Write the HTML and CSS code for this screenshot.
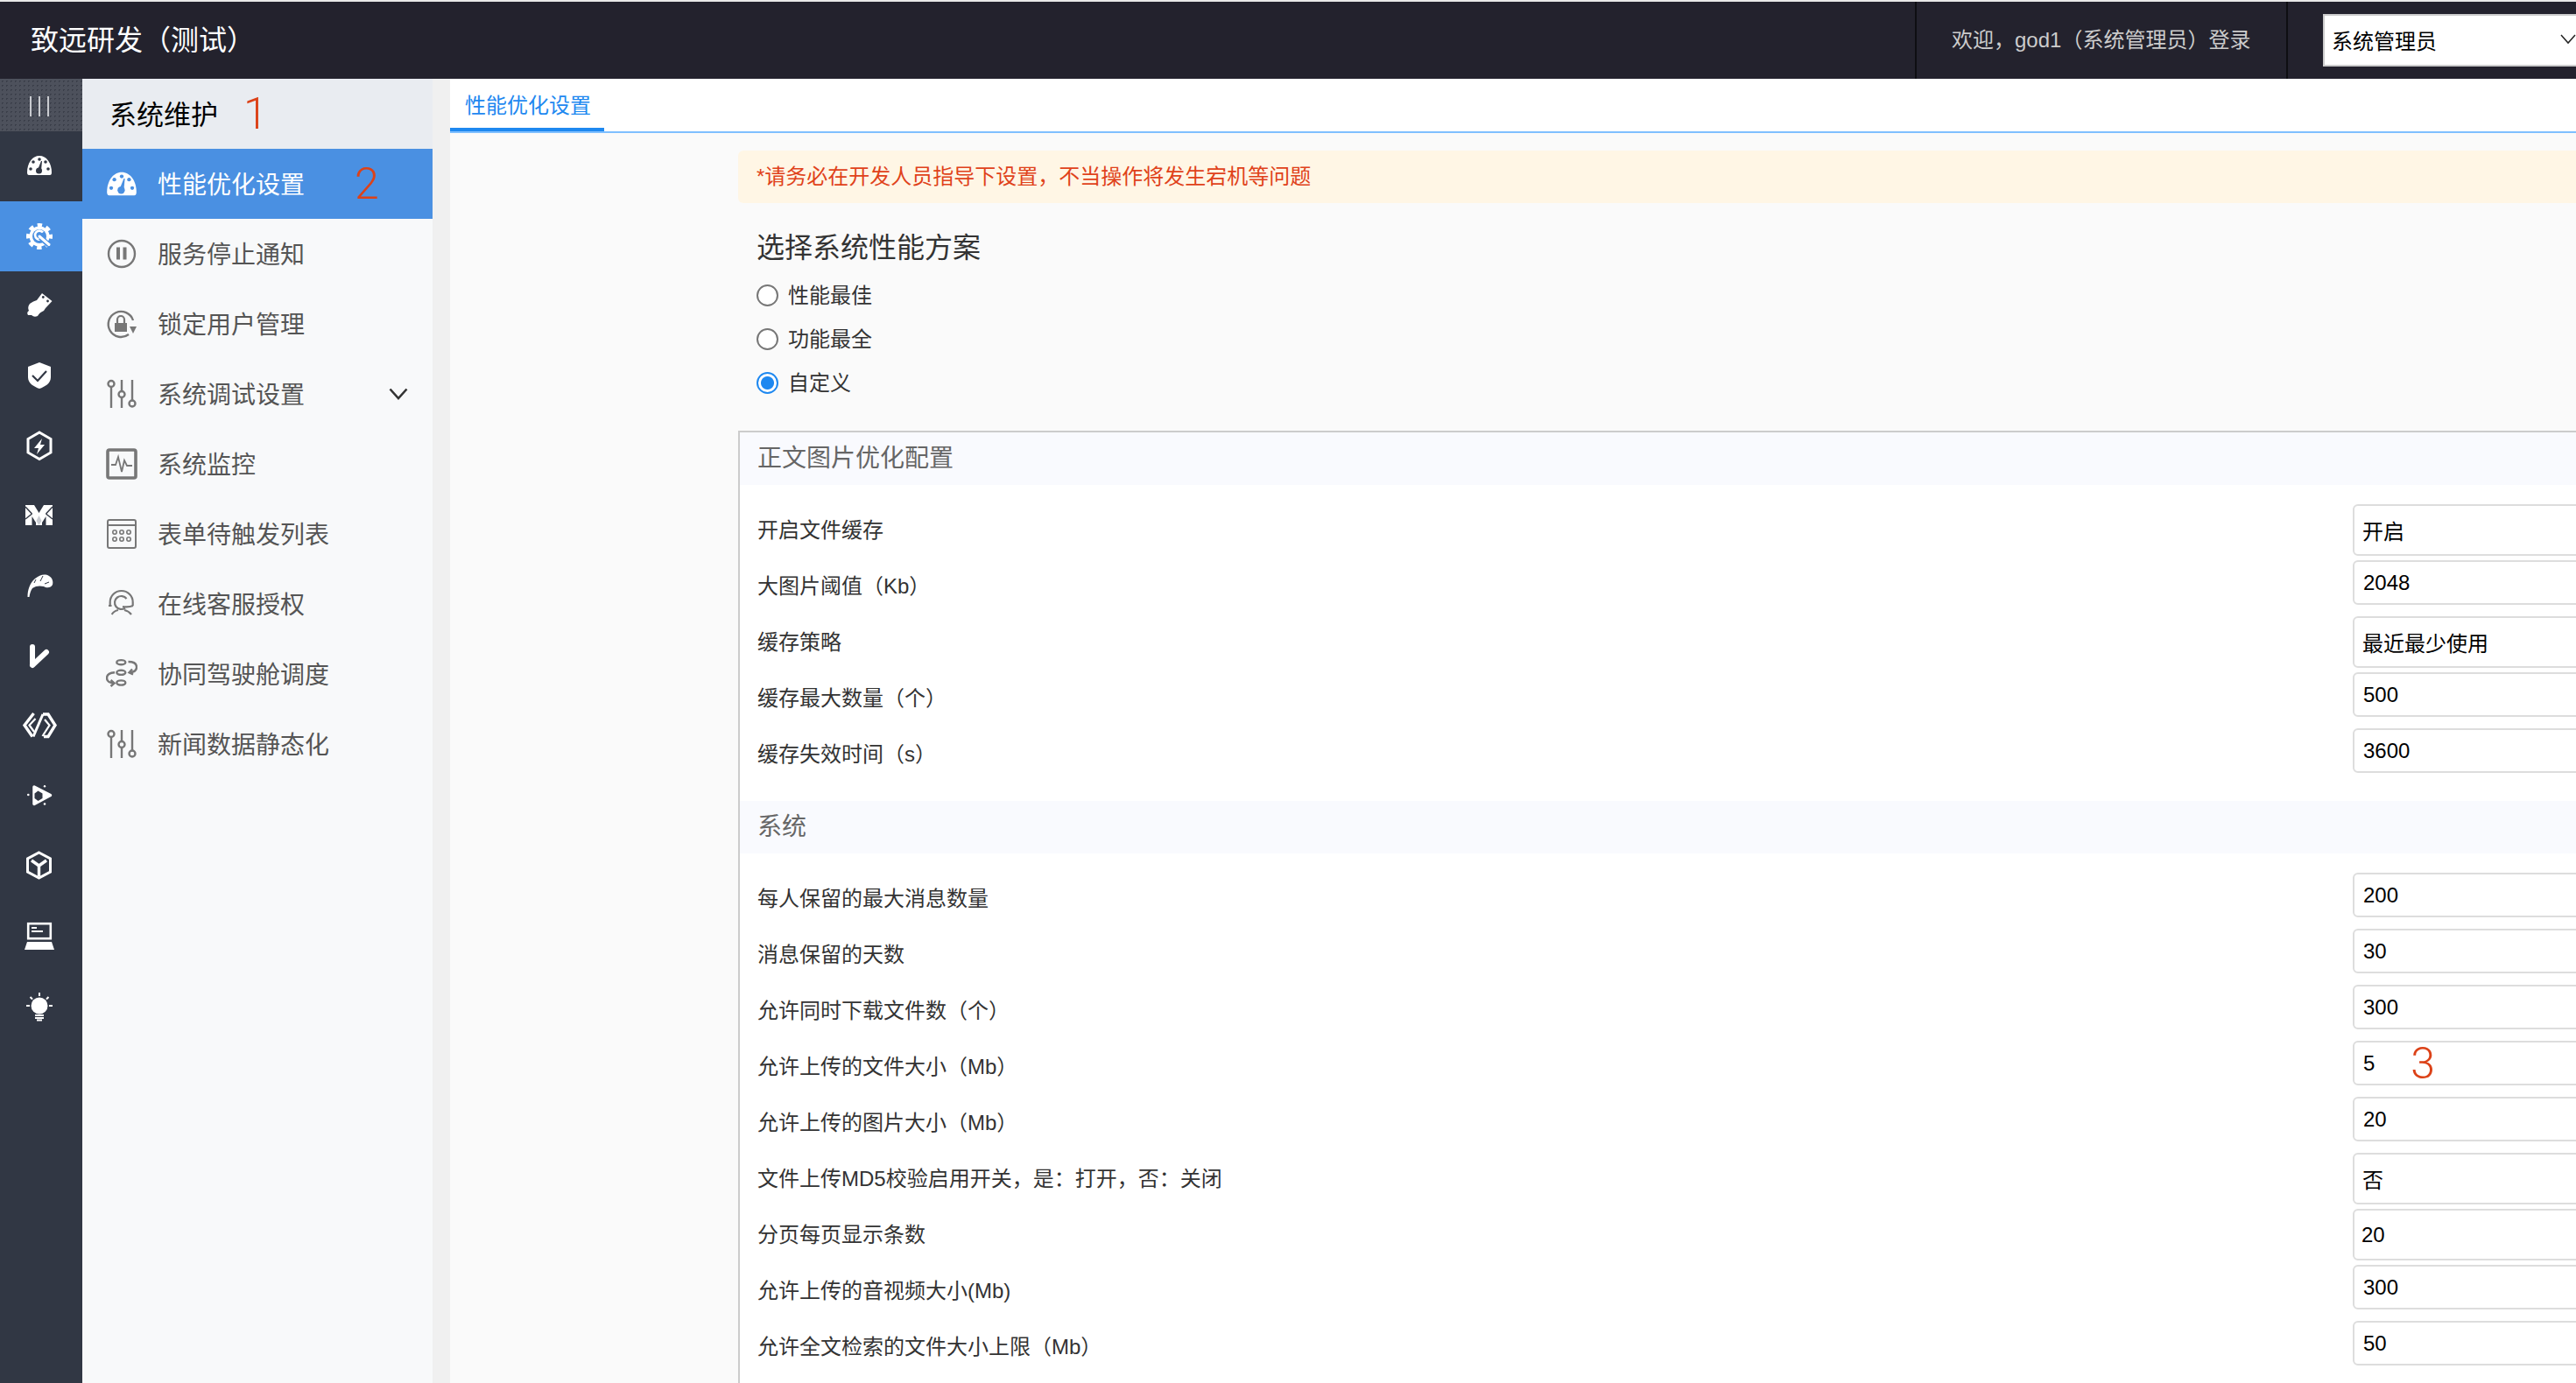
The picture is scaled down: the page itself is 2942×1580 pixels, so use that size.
FILE: index.html
```html
<!DOCTYPE html>
<html lang="zh-CN">
<head>
    <meta charset="UTF-8">
    <meta name="viewport" content="width=device-width, initial-scale=1.0">
    <title>性能优化设置</title>
    <link rel="stylesheet" href="styles.css">
</head>
<body>
    <header class="topbar">
        <div class="brand">致远研发（测试）</div>
        <div class="welcome">欢迎，god1（系统管理员）登录</div>
        <div class="role-box">
            <div class="role-select">
                <span>系统管理员</span>
                <svg class="role-arrow" viewBox="0 0 18 12"><polyline points="1 1 9 10 17 1"/></svg>
            </div>
        </div>
    </header>

    <div class="layout">
        <!-- icon rail -->
        <nav class="rail">
            <div class="rail-toggle"><span></span><span></span><span></span></div>
            <div class="rail-item">
                <svg viewBox="0 0 40 40"><path class="w" d="M8 30Q6 30 6 27C6 16 12 8 20 8S34 16 34 27Q34 30 32 30Z"/><g class="d"><circle cx="10" cy="23" r="1.8"/><circle cx="13" cy="15" r="1.8"/><circle cx="20" cy="12" r="1.8"/><circle cx="27" cy="15" r="1.8"/><circle cx="30" cy="23" r="1.8"/><circle cx="19.5" cy="25" r="3.5"/><path d="M18 24L22 14 23 14 22 25Z"/></g></svg>
            </div>
            <div class="rail-item active">
                <svg viewBox="0 0 40 40"><circle class="w" cx="20" cy="20" r="11.5"/><circle class="ws" cx="20" cy="20" r="12.5" stroke-width="5" stroke-dasharray="5.2 4.62" stroke-dashoffset="2.6"/><circle class="d" cx="20" cy="20" r="8"/><path class="ws" d="M24 15.5A5 5 0 1 0 24.5 21" stroke-width="2.6"/><line class="ds" x1="21" y1="21" x2="31" y2="30" stroke-width="6"/><line class="ws" x1="20" y1="20" x2="31" y2="29.5" stroke-width="3" stroke-linecap="round"/></svg>
            </div>
            <div class="rail-item">
                <svg viewBox="0 0 40 40"><path class="w" d="M23 5L34.5 14 27 22 25 25Q20 27 18 31Q14 33 11 30L7 30Q5 27 8 25Q6 21 9 17Q13 14 17 13Z"/><circle class="d" cx="24.3" cy="9.5" r="1.4"/><circle class="d" cx="29.5" cy="14" r="1.4"/></svg>
            </div>
            <div class="rail-item">
                <svg viewBox="0 0 40 40"><path class="w" d="M20 4L33 9V21C33 28 26 32 20 34C14 32 7 28 7 21V9Z"/><polyline class="ds" points="12 19 18 25 28 14" stroke-width="2.2"/></svg>
            </div>
            <div class="rail-item">
                <svg viewBox="0 0 40 40"><polygon class="ws" points="20 4 33 11.5 33 27 20 34.5 7 27 7 11.5" stroke-width="3"/><path class="w" d="M23 11L14 22H19L17 29 26 18H21Z"/></svg>
            </div>
            <div class="rail-item">
                <svg viewBox="0 0 40 40"><polygon class="w" points="4 7 14 7 19.5 16 25 7 35 7 35 30 4 30"/><g class="ds" stroke-width="1.4"><line x1="4" y1="9" x2="11.5" y2="17"/><line x1="35" y1="9" x2="27.5" y2="17"/><line x1="4" y1="23" x2="11.5" y2="17"/><line x1="35" y1="23" x2="27.5" y2="17"/></g><polygon class="d" points="11.5 31 11.5 20 16 27 16 31"/><polygon class="d" points="27.5 31 27.5 20 23 27 23 31"/><polygon class="gem" points="19.5 19 16.5 25 19.5 30 22.5 25"/></svg>
            </div>
            <div class="rail-item">
                <svg viewBox="0 0 40 40"><path class="w" d="M6.5 32C6.5 24 9 16 15 11C20 7 26 5 31 8C35 10 36 15 35 18C33 22 28 22 25 20C21 19 16 19 12 22C10 25 9 28 8.5 32Z"/><g class="ds" stroke-width="1"><line x1="24" y1="8" x2="21" y2="14"/><line x1="31" y1="15" x2="26" y2="17"/><line x1="16" y1="12" x2="14" y2="16"/></g></svg>
            </div>
            <div class="rail-item">
                <svg viewBox="0 0 40 40"><g class="ws" stroke-width="6" stroke-linecap="round"><line x1="12" y1="9" x2="12" y2="29"/><line x1="28" y1="15" x2="12" y2="30"/></g></svg>
            </div>
            <div class="rail-item">
                <svg viewBox="0 0 40 40"><g class="ws"><polyline points="13.5 5 3 18.5 12 31.5" stroke-width="3.4"/><polyline points="15.5 11 8.5 18.5 14 26" stroke-width="2.2"/><line x1="13" y1="31.5" x2="24" y2="6" stroke-width="3"/><polyline points="24 6 30 6 38 18.5 30 31.5 25 31.5" stroke-width="3.4"/><polyline points="26 12 31.5 18.5 23.5 31" stroke-width="2.2"/></g></svg>
            </div>
            <div class="rail-item">
                <svg viewBox="0 0 40 40"><polygon class="w tri" points="14 9 32.5 18.5 14 28.5"/><polygon class="d" points="18.5 13.5 23.5 16.5 23.5 22 18.5 25 14.5 22 14.5 16.5"/><circle class="w" cx="7.3" cy="18" r="1.3"/><circle class="w" cx="26" cy="8.3" r="1.2"/><circle class="w" cx="26" cy="28.5" r="1.3"/></svg>
            </div>
            <div class="rail-item">
                <svg viewBox="0 0 40 40"><polygon class="ws" points="19.5 4 32.5 11 32.5 26 19.5 33 6.5 26 6.5 11" stroke-width="3"/><g class="ws" stroke-width="3.4"><line x1="19.5" y1="18" x2="19.5" y2="31"/><line x1="19.5" y1="19" x2="11" y2="13"/><line x1="19.5" y1="19" x2="28" y2="13"/></g></svg>
            </div>
            <div class="rail-item">
                <svg viewBox="0 0 40 40"><rect class="ws" x="7.2" y="5.2" width="25.6" height="17" stroke-width="2.6"/><rect class="w" x="11" y="9" width="6" height="2"/><rect class="w" x="11" y="13" width="13" height="2"/><polygon class="w" points="6 26 34 26 37 35 3 35"/></svg>
            </div>
            <div class="rail-item">
                <svg viewBox="0 0 40 40"><circle class="w" cx="20" cy="19" r="9.5"/><g class="ws" stroke-width="2"><line x1="20" y1="4" x2="20" y2="8"/><line x1="5" y1="19" x2="9" y2="19"/><line x1="31" y1="19" x2="35" y2="19"/><line x1="9.5" y1="9" x2="12" y2="11.5"/><line x1="30.5" y1="9" x2="28" y2="11.5"/><line x1="15" y1="30" x2="25" y2="30"/><line x1="15" y1="33" x2="25" y2="33"/><line x1="17" y1="35.5" x2="23" y2="35.5"/></g></svg>
            </div>
        </nav>

        <!-- second level menu -->
        <aside class="sidebar">
            <div class="side-title"><span class="side-title-text">系统维护</span><span class="mark mark-one">1</span></div>
            <div class="side-item active">
                <svg class="side-icon" viewBox="5 4 30 30"><path class="fill-w" d="M8 30Q6 30 6 27C6 16 12 8 20 8S34 16 34 27Q34 30 32 30Z"/><g class="fill-b"><circle cx="10" cy="23" r="1.8"/><circle cx="13" cy="15" r="1.8"/><circle cx="20" cy="12" r="1.8"/><circle cx="27" cy="15" r="1.8"/><circle cx="30" cy="23" r="1.8"/><circle cx="19.5" cy="25" r="3.5"/><path d="M18 24L22 14 23 14 22 25Z"/></g></svg>
                <span class="side-text">性能优化设置</span><span class="mark mark-two">2</span>
            </div>
            <div class="side-item">
                <svg class="side-icon" viewBox="0 0 36 36"><circle cx="18" cy="18" r="15" stroke-width="2.4"/><rect class="fill-g" x="12" y="10.5" width="4" height="14"/><rect class="fill-g" x="19.5" y="10.5" width="4" height="14"/></svg>
                <span class="side-text">服务停止通知</span>
            </div>
            <div class="side-item">
                <svg class="side-icon" viewBox="0 0 36 36"><path d="M31 14A14.5 14.5 0 1 0 26 30" stroke-width="2.4"/><polygon class="fill-g" points="27 21 35 21 31 29"/><rect class="fill-g" x="10" y="17" width="14" height="10"/><path d="M13 17V13A4 4 0 0 1 21 13V17" stroke-width="2.2"/></svg>
                <span class="side-text">锁定用户管理</span>
            </div>
            <div class="side-item">
                <svg class="side-icon" viewBox="0 0 36 36"><g stroke-width="2.4"><line x1="6" y1="11" x2="6" y2="34"/><circle cx="6" cy="6.5" r="3.5"/><line x1="18" y1="2" x2="18" y2="15"/><circle cx="18" cy="18.5" r="3.5"/><line x1="18" y1="22" x2="18" y2="34"/><line x1="30" y1="2" x2="30" y2="25"/><circle cx="30" cy="29" r="3.5"/></g></svg>
                <span class="side-text">系统调试设置</span>
                <svg class="side-arrow" viewBox="0 0 22 14"><polyline points="1.5 1.5 11 12 20.5 1.5"/></svg>
            </div>
            <div class="side-item">
                <svg class="side-icon" viewBox="0 0 36 36"><rect x="2" y="2" width="32" height="32" rx="2" stroke-width="3.6"/><polyline points="6 19 11 19 14 10 18 27 21 14 24 20 30 20" stroke-width="1.8"/></svg>
                <span class="side-text">系统监控</span>
            </div>
            <div class="side-item">
                <svg class="side-icon" viewBox="0 0 36 36"><rect x="2" y="2" width="32" height="32" rx="2" stroke-width="2"/><line x1="2" y1="8" x2="34" y2="8" stroke-width="2"/><g stroke-width="1.6"><circle cx="10" cy="16" r="2.2"/><circle cx="18" cy="16" r="2.2"/><circle cx="26" cy="16" r="2.2"/><circle cx="10" cy="24" r="2.2"/><circle cx="18" cy="24" r="2.2"/><circle cx="26" cy="24" r="2.2"/></g></svg>
                <span class="side-text">表单待触发列表</span>
            </div>
            <div class="side-item">
                <svg class="side-icon" viewBox="0 0 36 36"><g stroke-width="2.2"><path d="M23.5 12A7.5 7.5 0 1 0 22 22.5"/><path d="M4.7 20V16A13 13 0 0 1 30.7 16V20"/><path d="M3 20H6.5M31 20Q26 22 19 21"/><path d="M6.7 30Q9 26 14 25M29 30Q26 26 21 25"/></g></svg>
                <span class="side-text">在线客服授权</span>
            </div>
            <div class="side-item">
                <svg class="side-icon" viewBox="0 0 36 36"><g stroke-width="2.4"><ellipse cx="17.3" cy="4.7" rx="5" ry="2.6"/><ellipse cx="17.3" cy="16.3" rx="5" ry="2.6"/><ellipse cx="17.3" cy="28" rx="5" ry="2.6"/><path d="M25.5 4Q35 4 35 10T27 16"/><polyline points="30 12.5 26.5 16.3 31 18.5"/><path d="M10 16.3Q1 17 1 22.5T9 28.5"/><polyline points="5.5 25 9.5 28.5 5.5 32"/></g></svg>
                <span class="side-text">协同驾驶舱调度</span>
            </div>
            <div class="side-item">
                <svg class="side-icon" viewBox="0 0 36 36"><g stroke-width="2.4"><line x1="6" y1="11" x2="6" y2="34"/><circle cx="6" cy="6.5" r="3.5"/><line x1="18" y1="2" x2="18" y2="15"/><circle cx="18" cy="18.5" r="3.5"/><line x1="18" y1="22" x2="18" y2="34"/><line x1="30" y1="2" x2="30" y2="25"/><circle cx="30" cy="29" r="3.5"/></g></svg>
                <span class="side-text">新闻数据静态化</span>
            </div>
        </aside>

        <div class="gutter"></div>

        <main class="content">
            <div class="tabs">
                <div class="tab active">性能优化设置</div>
            </div>

            <div class="page">
                <div class="warning">*请务必在开发人员指导下设置，不当操作将发生宕机等问题</div>

                <h2 class="plan-title">选择系统性能方案</h2>
                <label class="plan-row"><input type="radio" name="plan">性能最佳</label>
                <label class="plan-row"><input type="radio" name="plan">功能最全</label>
                <label class="plan-row"><input type="radio" name="plan" checked>自定义</label>

                <section class="panel">
                    <div class="panel-head">正文图片优化配置</div>
                    <div class="group">
                        <div class="labels">
                            <div class="label">开启文件缓存</div>
                            <div class="label">大图片阈值（Kb）</div>
                            <div class="label">缓存策略</div>
                            <div class="label">缓存最大数量（个）</div>
                            <div class="label">缓存失效时间（s）</div>
                        </div>
                        <div class="fields">
                            <div class="field select">开启</div>
                            <div class="field">2048</div>
                            <div class="field select">最近最少使用</div>
                            <div class="field">500</div>
                            <div class="field">3600</div>
                        </div>
                    </div>

                    <div class="panel-head second">系统</div>
                    <div class="group">
                        <div class="labels">
                            <div class="label">每人保留的最大消息数量</div>
                            <div class="label">消息保留的天数</div>
                            <div class="label">允许同时下载文件数（个）</div>
                            <div class="label">允许上传的文件大小（Mb）</div>
                            <div class="label">允许上传的图片大小（Mb）</div>
                            <div class="label">文件上传MD5校验启用开关，是：打开，否：关闭</div>
                            <div class="label">分页每页显示条数</div>
                            <div class="label">允许上传的音视频大小(Mb)</div>
                            <div class="label">允许全文检索的文件大小上限（Mb）</div>
                        </div>
                        <div class="fields">
                            <div class="field">200</div>
                            <div class="field">30</div>
                            <div class="field">300</div>
                            <div class="field">5<span class="mark mark-three">3</span></div>
                            <div class="field">20</div>
                            <div class="field select">否</div>
                            <div class="field select tight">20</div>
                            <div class="field">300</div>
                            <div class="field">50</div>
                        </div>
                    </div>
                </section>
            </div>
        </main>
    </div>
</body>
</html>
```

FILE: styles.css
```css
html, body {
    height: 100%;
    margin: 0;
    overflow: hidden;
}
body {
    padding-top: 2px;
    box-sizing: border-box;
    display: flex;
    flex-direction: column;
    background-color: #e8e8e8;
    color: #333;
    font-family: "Liberation Sans", "Noto Sans CJK SC", sans-serif;
    font-size: 24px;
}

/* top bar */
.topbar {
    flex: none;
    display: flex;
    align-items: stretch;
    height: 88px;
    background-color: #23222d;
}
.brand {
    flex: 1;
    padding-left: 35px;
    line-height: 88px;
    font-size: 32px;
    color: #fff;
}
.welcome {
    flex: none;
    box-sizing: border-box;
    width: 424px;
    padding-left: 40px;
    border-left: 2px solid #0e0e12;
    line-height: 88px;
    color: #ccc;
    white-space: nowrap;
}
.role-box {
    flex: none;
    box-sizing: border-box;
    width: 331px;
    padding: 14px 0 0 40px;
    border-left: 2px solid #0e0e12;
}
.role-select {
    display: flex;
    align-items: center;
    justify-content: space-between;
    box-sizing: border-box;
    height: 60px;
    padding: 0 0 2px 8px;
    border: 2px solid #ccc;
    border-right: none;
    background-color: #fff;
    color: #000;
}
.role-arrow {
    width: 18px;
    height: 12px;
    fill: none;
    stroke: #222;
    stroke-width: 1.5;
}

.layout {
    flex: 1;
    display: flex;
    min-height: 0;
}

/* icon rail */
.rail {
    flex: none;
    width: 94px;
    background-color: #313744;
}
.rail-toggle {
    display: flex;
    justify-content: center;
    gap: 8px;
    height: 60px;
    padding: 20px 4px 0 0;
    box-sizing: border-box;
    background-color: #4d515c;
    background-image: radial-gradient(#3a3e49 1px, transparent 1px);
    background-size: 5px 5px;
}
.rail-toggle span {
    width: 2px;
    height: 23px;
    background-color: #c9cbd0;
}
.rail-item {
    --dark: #313744;
    display: flex;
    align-items: center;
    justify-content: center;
    height: 80px;
    padding-right: 4px;
    box-sizing: border-box;
}
.rail-item.active {
    --dark: #4a90e2;
    background-color: #4a90e2;
}
.rail-item svg {
    width: 40px;
    height: 40px;
}
.rail-item .w {
    fill: #fff;
}
.rail-item .tri {
    stroke: #fff;
    stroke-width: 3.5;
    stroke-linejoin: round;
}
.rail-item .gem {
    fill: #c9ccd2;
}
.rail-item .ws {
    fill: none;
    stroke: #fff;
}
.rail-item .d {
    fill: var(--dark);
}
.rail-item .ds {
    fill: none;
    stroke: var(--dark);
}

/* second level menu */
.sidebar {
    flex: none;
    width: 400px;
    background-color: #f8f9fa;
}
.side-title {
    display: flex;
    align-items: center;
    height: 80px;
    padding-left: 31px;
    background-color: #e9ecf1;
    color: #000;
    font-size: 31px;
}
.side-title-text {
    margin-bottom: 3px;
}
.side-item {
    display: flex;
    align-items: center;
    gap: 23px;
    height: 80px;
    padding-left: 27px;
    font-size: 28px;
    color: #555;
}
.side-item.active {
    background-color: #4a90e2;
    color: #fff;
}
.side-text {
    margin-bottom: 3px;
}
.side-icon {
    flex: none;
    width: 36px;
    height: 36px;
    fill: none;
    stroke: #777;
}
.side-icon .fill-g {
    fill: #777;
    stroke: none;
}
.side-icon .fill-w {
    fill: #fff;
    stroke: none;
}
.side-icon .fill-b {
    fill: #4a90e2;
    stroke: none;
}
.side-arrow {
    width: 22px;
    height: 14px;
    margin-left: 73px;
    fill: none;
    stroke: #333;
    stroke-width: 2.6;
}

/* red digits laid over the screenshot */
.mark {
    font-family: Roboto, "Liberation Sans", sans-serif;
    font-weight: 300;
    font-size: 50px;
    line-height: 1;
    color: #dc4218;
}
.mark-one {
    margin-left: 29px;
}
.mark-two {
    margin-left: 34px;
}
.mark-three {
    margin-left: 41px;
}

.gutter {
    flex: none;
    width: 20px;
    background-color: #f0f0f0;
}

/* main area */
.content {
    flex: 1;
    min-width: 0;
    display: flex;
    flex-direction: column;
    background-color: #fafafa;
}
.tabs {
    flex: none;
    box-sizing: border-box;
    height: 62px;
    border-bottom: 2px solid #7fbfff;
    background-color: #fff;
}
.tab {
    box-sizing: border-box;
    width: 176px;
    height: 60px;
    padding-left: 17px;
    line-height: 62px;
    color: #1e88f0;
}
.tab.active {
    border-bottom: 4px solid #1e88f0;
}
.page {
    flex: 1;
    min-height: 0;
    display: flex;
    flex-direction: column;
    padding: 20px 0 0 329px;
}
.warning {
    flex: none;
    height: 60px;
    margin-right: -10px;
    padding-left: 21px;
    border-radius: 6px;
    background-color: #fff6e5;
    line-height: 60px;
    color: #e0421a;
}
.plan-title {
    flex: none;
    margin: 31px 0 7px 21px;
    font-size: 32px;
    font-weight: 400;
    line-height: 40px;
}
.plan-row {
    flex: none;
    display: flex;
    align-items: center;
    gap: 11px;
    height: 50px;
    margin-left: 21px;
}
.plan-row input {
    appearance: none;
    box-sizing: border-box;
    width: 25px;
    height: 25px;
    margin: 4px 0 0;
    border: 2px solid #777;
    border-radius: 50%;
    background-color: #fff;
}
.plan-row input:checked {
    border-color: #1e88f0;
    background: radial-gradient(circle, #1e88f0 0, #1e88f0 7px, #fff 8px);
}

.panel {
    flex: 1;
    min-height: 0;
    margin-top: 32px;
    border-top: 2px solid #ccc;
    border-left: 2px solid #ccc;
    background-color: #fff;
}
.panel-head {
    height: 60px;
    padding-left: 20px;
    background-color: #f9fafe;
    line-height: 60px;
    font-size: 28px;
    color: #666;
}
.panel-head.second {
    margin-top: 19px;
}
.group {
    display: flex;
}
.labels {
    flex: 1;
    padding: 20px 0 0 20px;
}
.label {
    height: 64px;
    line-height: 64px;
    color: #333;
}
.fields {
    flex: none;
    width: 265px;
    margin-right: -10px;
    padding-top: 22px;
}
.field {
    box-sizing: border-box;
    display: flex;
    align-items: center;
    height: 51px;
    margin-bottom: 13px;
    padding-left: 10px;
    border: 2px solid #ddd;
    border-radius: 6px;
    background-color: #fff;
    color: #000;
}
.field.select {
    height: 59px;
    margin-bottom: 5px;
    padding-left: 9px;
}
.field.tight {
    padding-left: 8px;
}
```
